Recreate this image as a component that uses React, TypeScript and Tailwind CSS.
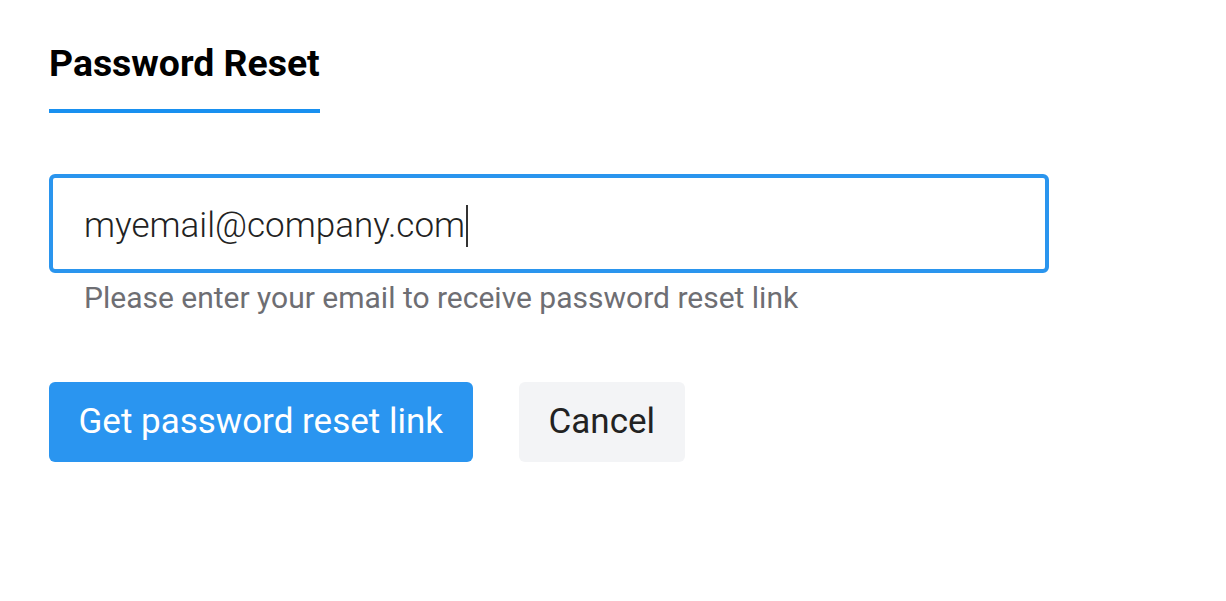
export default function App() {
  return (
    <div className="min-h-screen bg-white px-[49px] pt-[41px] font-['Roboto',sans-serif]">
      <div className="inline-block">
        <h1 className="text-[37.4px] font-bold leading-[44px] text-black">Password Reset</h1>
        <div className="mt-[24px] h-[4px] bg-[#1890f0]" />
      </div>

      <div className="mt-[61px] w-[1000px]">
        <div className="flex h-[99px] items-center rounded-[6px] border-4 border-[#2a95ee] px-[31px] pt-[5px]">
          <span className="text-[35px] font-light text-[#222]">myemail@company.com</span>
          <span className="ml-[1px] h-[42px] w-[2px] bg-[#333]" />
        </div>
        <p className="mt-[5px] pl-[35px] text-[30px] leading-[40px] text-[#6e6e73]">
          Please enter your email to receive password reset link
        </p>
      </div>

      <div className="mt-[64px] flex gap-[46px]">
        <button className="h-[80px] rounded-[6px] bg-[#2a95f0] px-[29.5px] text-[35px] text-white">
          Get password reset link
        </button>
        <button className="h-[80px] rounded-[6px] bg-[#f3f4f6] px-[30px] text-[35px] text-[#222]">
          Cancel
        </button>
      </div>
    </div>
  );
}
